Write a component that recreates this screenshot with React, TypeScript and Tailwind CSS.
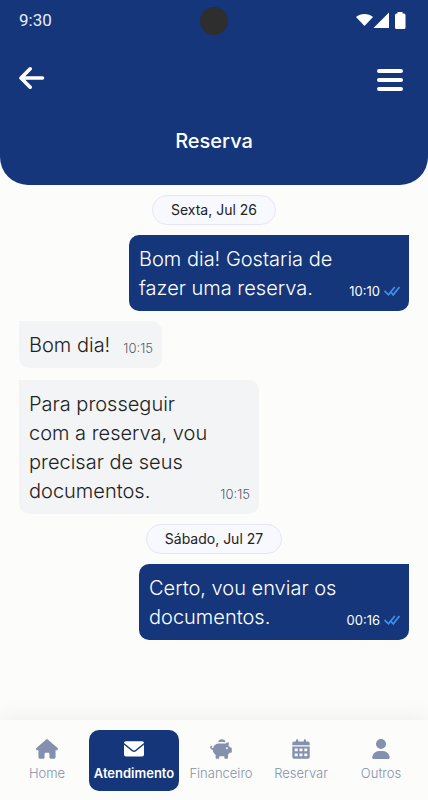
import { FaHouse, FaUser } from "react-icons/fa6"

type Message = {
  lines: string[]
  time: string
  sent?: boolean
  grouped?: boolean
  width: string
}

type IconProps = { className?: string }

const days: { label: string; messages: Message[] }[] = [
  {
    label: "Sexta, Jul 26",
    messages: [
      { lines: ["Bom dia! Gostaria de", "fazer uma reserva."], time: "10:10", sent: true, width: "w-[280px]" },
      { lines: ["Bom dia!"], time: "10:15", width: "w-[143px]" },
      {
        lines: ["Para prosseguir", "com a reserva, vou", "precisar de seus", "documentos."],
        time: "10:15",
        grouped: true,
        width: "w-60",
      },
    ],
  },
  {
    label: "Sábado, Jul 27",
    messages: [{ lines: ["Certo, vou enviar os", "documentos."], time: "00:16", sent: true, width: "w-[270px]" }],
  },
]

function EnvelopeIcon({ className }: IconProps) {
  return (
    <svg className={className} viewBox="0 0 20 20" fill="currentColor">
      <path d="M2 2.200H18Q20 2.200 20 4L11.300 11Q10 12 8.700 11L0 4Q0 2.200 2 2.200Z" />
      <path d="M0 5.800L8 12.200Q10 13.700 12 12.200L20 5.800V15.500Q20 17.500 18 17.500H2Q0 17.500 0 15.500Z" />
    </svg>
  )
}

function PiggyBankIcon({ className }: IconProps) {
  return (
    <svg className={className} viewBox="0 0 22 20" fill="currentColor">
      <path d="M8.300 3.200C8.500 1.200 10 0.300 11.800 0.300S15.300 1.200 15.500 3.200Q11.900 2.500 8.300 3.200Z" />
      <path
        fillRule="evenodd"
        d="M9 4.500H14.500L15.500 4.700C16.400 3.800 17.400 3.500 19 3.600L18.500 6.400Q19.600 7.400 20.100 8.600H21Q21.800 8.600 21.800 9.400V13Q21.800 13.800 21 13.800H19.600Q19 14.800 18 15.600V18.800Q18 19.700 17.100 19.700H15.200Q14.300 19.700 14.300 18.800V17.200H9.300V18.800Q9.300 19.700 8.400 19.700H6.500Q5.600 19.700 5.600 18.800V15.700C3.900 14.600 3 13 2.800 11C1.100 10.700 0.200 9.700 0.200 8.300Q0.200 6.900 1.400 6.700Q2.200 6.700 2.200 7.400Q2.200 7.800 1.700 8.200Q1.700 9.100 3 9.200C3.700 6.300 6 4.500 9 4.500ZM16.900 8.300A1 1 0 1 0 16.900 10.300A1 1 0 1 0 16.900 8.300Z"
      />
    </svg>
  )
}

function CalendarIcon({ className }: IconProps) {
  return (
    <svg className={className} viewBox="0 0 20 20" fill="currentColor">
      <path d="M5 1.200Q5 0.200 6.100 0.200T7.200 1.200V2.500H12.800V1.200Q12.800 0.200 13.900 0.200T15 1.200V2.500H17Q18.700 2.500 18.700 4.200V6.200H1.300V4.200Q1.300 2.500 3 2.500H5Z" />
      <path
        fillRule="evenodd"
        d="M1.300 7.500H18.700V18Q18.700 19.800 17 19.800H3Q1.300 19.800 1.300 18ZM3.700 9.500V12.300H6.700V9.500ZM8.500 9.500V12.300H11.500V9.500ZM13.300 9.500V12.300H16.300V9.500ZM3.700 14.500V17.300H6.700V14.500ZM8.500 14.500V17.300H11.500V14.500ZM13.300 14.500V17.300H16.300V14.500Z"
      />
    </svg>
  )
}

const tabs = [
  { icon: FaHouse, label: "Home" },
  { icon: EnvelopeIcon, label: "Atendimento", active: true },
  { icon: PiggyBankIcon, label: "Financeiro" },
  { icon: CalendarIcon, label: "Reservar" },
  { icon: FaUser, label: "Outros" },
]

function StatusBar() {
  return (
    <div className="relative flex h-[42px] items-center justify-between pl-[19px] pr-[22px]">
      <span className="font-[Roboto,sans-serif] text-[17px] text-[#e6ecf8]">9:30</span>
      <span className="absolute left-1/2 top-[7px] size-7 -translate-x-1/2 rounded-full bg-[#2e2e2e]" />
      <svg className="h-[18px] w-[50px]" viewBox="0 0 50 18" fill="currentColor">
        <path d="M0 5C4.500 1 12.500 1 17 5L8.500 14Z" />
        <path d="M17.500 16L33 0.500V16Z" />
        <path d="M41.500 1.500V0H46.500V1.500H48Q49.500 1.500 49.500 3V15.500Q49.500 17 48 17H40.500Q39 17 39 15.500V3Q39 1.500 40.500 1.500Z" />
      </svg>
    </div>
  )
}

function Header() {
  return (
    <header className="shrink-0 rounded-b-[28px] bg-[#15367b] pb-[29px] text-white">
      <StatusBar />
      <div className="flex items-start justify-between pl-[19px] pr-[25px] pt-5">
        <button type="button" aria-label="Voltar" className="flex h-8 items-center">
          <svg
            className="h-6 w-[26px]"
            viewBox="0 0 26 24"
            fill="none"
            stroke="currentColor"
            strokeWidth="3.6"
            strokeLinecap="round"
            strokeLinejoin="round"
          >
            <path d="M11.200 2.800L2 12L11.200 21.200M2.500 12H23.500" />
          </svg>
        </button>
        <button type="button" aria-label="Menu" className="flex h-9 w-[26px] flex-col justify-center gap-[5px]">
          <span className="h-1 w-full rounded-full bg-white" />
          <span className="h-1 w-full rounded-full bg-white" />
          <span className="h-1 w-full rounded-full bg-white" />
        </button>
      </div>
      <h1 className="pt-7 text-center text-xl font-medium leading-[30px]">Reserva</h1>
    </header>
  )
}

function DoubleCheck() {
  return (
    <svg className="h-3 w-4" viewBox="0 0 16 12" fill="none" stroke="#3f8eea" strokeWidth="1.800">
      <path d="M0.500 6L4.500 9.800L10.800 2" />
      <path d="M6.500 7L9.200 9.800L15.500 2" />
    </svg>
  )
}

function Bubble({ lines, time, sent, grouped, width }: Message) {
  return (
    <div
      className={`relative max-w-[90%] rounded-[10px] px-[10px] pb-2 pt-[10px] ${width} ${
        sent ? "self-end rounded-tr-none bg-[#15367b] text-white" : "self-start rounded-tl-none bg-[#f3f4f6] text-[#222]"
      } ${grouped ? "mt-0.5" : ""}`}
    >
      <p className="text-xl font-light leading-[29px]">
        {lines.map((line) => (
          <span key={line} className="block whitespace-nowrap">
            {line}
          </span>
        ))}
      </p>
      <div className="absolute bottom-[10px] right-[9px] flex items-center gap-1">
        <time className={`text-[13px] leading-5 ${sent ? "" : "font-light text-[#555b66]"}`}>{time}</time>
        {sent && <DoubleCheck />}
      </div>
    </div>
  )
}

function TabBar() {
  return (
    <nav className="flex h-20 shrink-0 items-center bg-[#fcfcfa] px-[7px] shadow-[0_-4px_20px_rgba(0,0,0,0.05)]">
      {tabs.map(({ icon: Icon, label, active }) => (
        <a
          key={label}
          href={`#${label.toLowerCase()}`}
          className={`flex h-[61px] flex-col items-center gap-1 pt-[9px] text-[13px] leading-5 ${
            active
              ? "mx-[2px] w-[90px] rounded-[10px] bg-[#15367b] font-semibold text-white"
              : "min-w-0 flex-1 text-[#8491ae]"
          }`}
        >
          <Icon className="h-5 w-[22px]" />
          <span className={active ? "" : "font-light"}>{label}</span>
        </a>
      ))}
    </nav>
  )
}

export default function App() {
  return (
    <div className="flex min-h-screen flex-col bg-[#fcfcfa] font-[Inter,sans-serif]">
      <Header />
      <main className="flex flex-1 flex-col gap-[10px] px-[19px] py-[10px]">
        {days.map((day) => (
          <section key={day.label} className="flex flex-col gap-[10px]">
            <h2 className="self-center rounded-full border border-[#e6e6f8] bg-[#f8f8ff] px-[18px] py-1 text-sm leading-5 text-[#222]">
              {day.label}
            </h2>
            {day.messages.map((message, index) => (
              <Bubble key={index} {...message} />
            ))}
          </section>
        ))}
      </main>
      <TabBar />
    </div>
  )
}
